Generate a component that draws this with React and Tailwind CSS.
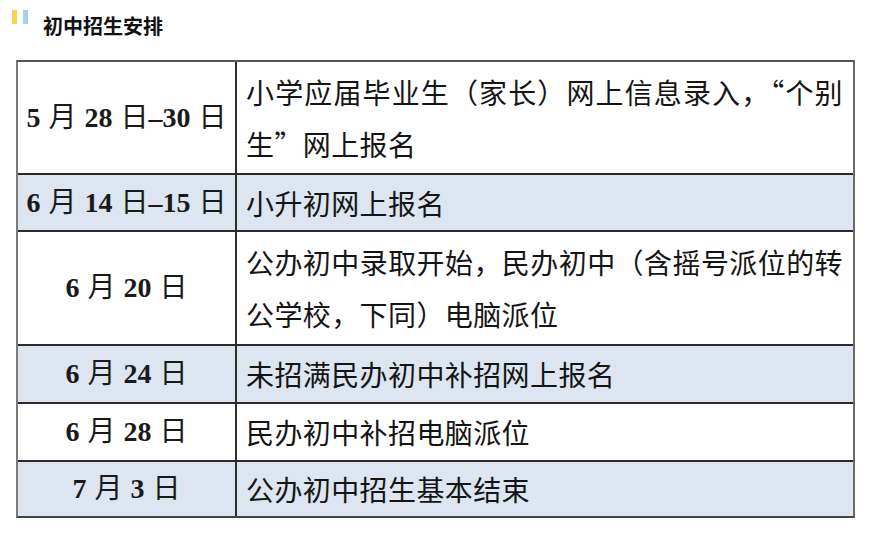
// 初中招生安排 — 日程表
const ROWS = [
  { date: '5 月 28 日–30 日', lines: ['小学应届毕业生（家长）网上信息录入，“个别', '生”网上报名'], h: 'h-[111px]', blue: false },
  { date: '6 月 14 日–15 日', lines: ['小升初网上报名'], h: 'h-[57px]', blue: true },
  { date: '6 月 20 日', lines: ['公办初中录取开始，民办初中（含摇号派位的转', '公学校，下同）电脑派位'], h: 'h-[114px]', blue: false },
  { date: '6 月 24 日', lines: ['未招满民办初中补招网上报名'], h: 'h-[58px]', blue: true },
  { date: '6 月 28 日', lines: ['民办初中补招电脑派位'], h: 'h-[58px]', blue: false },
  { date: '7 月 3 日', lines: ['公办初中招生基本结束'], h: 'h-[56px]', blue: true },
]

const serif = { fontFamily: '"Liberation Serif", "Noto Sans CJK SC", serif' }

// 数字用粗体 Times，汉字常规
function DateText({ text }) {
  const parts = text.split(/([0-9–]+)/).filter(Boolean)
  return parts.map((p, i) =>
    /[0-9–]/.test(p)
      ? <span key={i} className="font-bold">{p}</span>
      : <span key={i} className="font-normal">{p}</span>
  )
}

export default function App() {
  return (
    <div className="w-[870px] h-[539px] bg-white overflow-hidden" style={{ fontFamily: '"Noto Sans CJK SC", sans-serif' }}>
      {/* 标题 */}
      <div className="flex items-start pt-[10px] pl-[12px] h-[60px]">
        <div className="w-[5px] h-[14px] bg-[#f4d64e]" />
        <div className="w-[5px] h-[14px] bg-[#a3d5d8] ml-[6px]" />
        <div className="ml-[15px] mt-[6px] text-[20px] leading-none font-bold text-[#111]">初中招生安排</div>
      </div>

      {/* 表格 */}
      <div className="ml-[16px] w-[839px] border-2 border-l-[#7a7a7a] border-t-[#555] border-r-[#6a6a6a] border-b-[#444]">
        {ROWS.map((r, i) => (
          <div key={i} className={`flex ${r.h} ${i > 0 ? 'border-t-2 border-[#2a2a2a]' : ''} ${r.blue ? 'bg-[#dce5f0]' : 'bg-white'}`}>
            <div className="w-[219px] shrink-0 flex items-center justify-center border-r-2 border-[#2e2e2e] text-[28px] text-[#1a1a1a] whitespace-pre [word-spacing:1px]" style={serif}>
              <DateText text={r.date} />
            </div>
            <div className="flex-1 flex flex-col justify-center pl-[9px] text-[28px] text-[#151515] tracking-[0.4px]">
              {r.lines.map((l, j) => (
                <div key={j} className={`leading-[52px] whitespace-nowrap ${r.lines.length > 1 && j === 0 ? 'w-[597px] text-justify [text-align-last:justify]' : ''}`}>{l}</div>
              ))}
            </div>
          </div>
        ))}
      </div>
    </div>
  )
}
